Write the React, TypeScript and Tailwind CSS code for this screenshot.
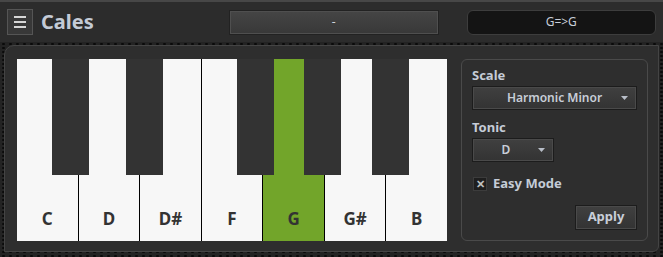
import React from "react";

const whiteKeys = ["C", "D", "D#", "F", "G", "G#", "B"];
const blackKeys = [35, 109, 220, 287, 355];

function Caret() {
  return (
    <svg width="7" height="4" viewBox="0 0 7 4" className="absolute right-[8px] top-1/2 -translate-y-1/2">
      <path d="M0 0h7L3.5 4z" fill="#b8bec8" />
    </svg>
  );
}

export default function App() {
  return (
    <div className="w-[663px] h-[257px] bg-[#2c2c2c] flex flex-col font-['Noto_Sans','Open_Sans',sans-serif] overflow-hidden">
      {/* Header */}
      <header className="h-[42px] shrink-0 border-t-2 border-[#474747] flex items-center px-[7px]">
        <button className="w-[26px] h-[26px] flex flex-col items-center justify-center gap-[3px] bg-[#383838] border border-[#555]">
          <span className="block w-[12px] h-[2px] bg-[#d6d6d6]" />
          <span className="block w-[12px] h-[2px] bg-[#d6d6d6]" />
          <span className="block w-[12px] h-[2px] bg-[#d6d6d6]" />
        </button>
        <h1 className="ml-[8px] text-[20px] font-bold text-[#c4cbd6] leading-none">Cales</h1>
        <button className="ml-[135px] w-[210px] h-[25px] border border-[#222] bg-gradient-to-b from-[#454545] to-[#383838] shadow-[inset_0_0_0_1px_#4f4f4f] text-[#cfd4dc] text-[12px]">
          -
        </button>
        <div className="ml-[28px] w-[189px] h-[25px] rounded-[6px] bg-[#141414] border border-[#3d3d3d] flex items-center justify-center text-[12px] text-[#c8ced8]">
          G=&gt;G
        </div>
      </header>

      {/* Dotted frame */}
      <div className="flex-1 pt-[3px] pl-[4px] pr-[4px] pb-[5px] bg-[#232323] bg-[radial-gradient(circle,#0a0a0a_1px,transparent_1.5px)] bg-[length:7px_4px]">
        <div className="h-full rounded-tl-[10px] rounded-br-[6px] border border-[#444] bg-[#2e2e2e] flex pl-[12px] pt-[13px]">
          {/* Keyboard */}
          <div className="relative w-[430px] h-[182px] flex bg-[#f7f7f7]">
            {whiteKeys.map((k, i) => (
              <div
                key={k}
                className={`flex-1 flex items-end justify-center pb-[10px] text-[17px] font-bold text-[#333] ${
                  i > 0 ? "border-l border-black" : ""
                } ${k === "G" ? "bg-[#72a52a]" : ""}`}
              >
                {k}
              </div>
            ))}
            {blackKeys.map((x) => (
              <div key={x} className="absolute top-0 w-[37px] h-[116px] bg-[#333]" style={{ left: x }} />
            ))}
          </div>

          {/* Options */}
          <div className="ml-[14px] w-[187px] h-[182px] rounded-[6px] border border-[#4a4a4a] px-[10px] pt-[6px] flex flex-col text-[#c5ccd7]">
            <label className="text-[13px] font-bold leading-[18px]">Scale</label>
            <div className="relative mt-[2px] w-[165px] h-[24px] border border-[#1c1c1c] bg-gradient-to-b from-[#404040] to-[#333] shadow-[inset_0_0_0_1px_#4a4a4a] flex items-center justify-center text-[12px] font-semibold text-[#c8ced8]">
              Harmonic Minor
              <Caret />
            </div>
            <label className="mt-[8px] text-[13px] font-bold leading-[18px]">Tonic</label>
            <div className="relative mt-[2px] w-[82px] h-[24px] border border-[#1c1c1c] bg-gradient-to-b from-[#404040] to-[#333] shadow-[inset_0_0_0_1px_#4a4a4a] flex items-center justify-center text-[12px] font-semibold text-[#c8ced8]">
              <span className="-ml-[14px]">D</span>
              <Caret />
            </div>
            <div className="mt-[12px] flex items-center gap-[6px] pl-[1px]">
              <span className="w-[14px] h-[14px] bg-[#1e1e1e] border border-[#3c3c3c] flex items-center justify-center text-[11px] font-bold leading-none text-[#c0c0c0]">
                ✕
              </span>
              <span className="text-[13px] font-bold">Easy Mode</span>
            </div>
            <div className="mt-[11px] flex justify-end">
              <button className="w-[62px] h-[25px] border border-[#1c1c1c] bg-gradient-to-b from-[#404040] to-[#333] shadow-[inset_0_0_0_1px_#4a4a4a] text-[13px] font-bold text-[#c8ced8]">
                Apply
              </button>
            </div>
          </div>
        </div>
      </div>
    </div>
  );
}
